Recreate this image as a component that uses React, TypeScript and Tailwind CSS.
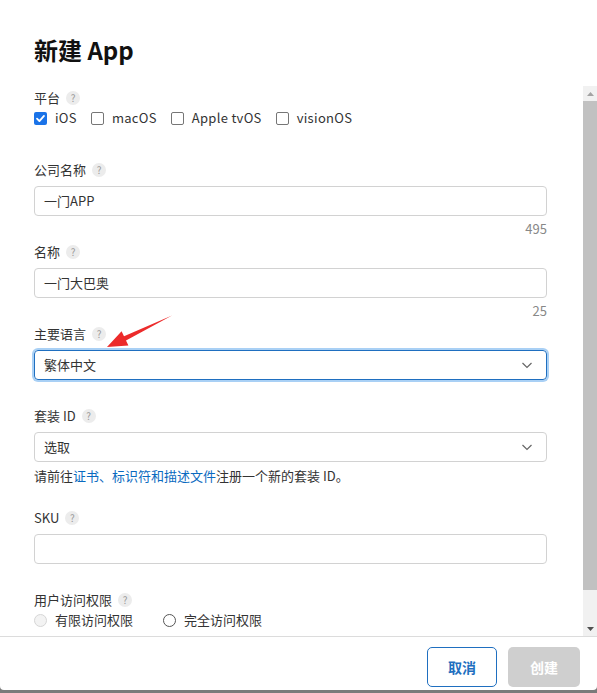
import React from "react";

const font = { fontFamily: '"Microsoft YaHei", "Noto Sans CJK SC", "Liberation Sans", sans-serif' };

function Q() {
  return (
    <span className="ml-[6px] inline-flex h-[14px] w-[14px] items-center justify-center rounded-full bg-[#ececec] text-[10px] leading-none text-[#9a9a9a]">
      ?
    </span>
  );
}

function Label({ children }: { children: React.ReactNode }) {
  return (
    <div className="flex h-[18px] items-center text-[13px] leading-[18px] text-[#333]">
      <span>{children}</span>
      <Q />
    </div>
  );
}

function Check({ checked, label }: { checked?: boolean; label: string }) {
  return (
    <div className="flex items-center">
      {checked ? (
        <span className="flex h-[13px] w-[13px] items-center justify-center rounded-[2px] bg-[#1a73e8]">
          <svg width="11" height="11" viewBox="0 0 12 12">
            <path d="M2.2 6.2 L4.8 8.8 L9.8 3.2" fill="none" stroke="white" strokeWidth="2" strokeLinecap="round" strokeLinejoin="round" />
          </svg>
        </span>
      ) : (
        <span className="h-[13px] w-[13px] rounded-[2px] border border-[#767676] bg-white" />
      )}
      <span className="ml-[8px] text-[13px] tracking-[0.3px] text-[#333]">{label}</span>
    </div>
  );
}

function Chevron() {
  return (
    <svg width="14" height="14" viewBox="0 0 14 14">
      <path d="M2.5 5 L7 9.5 L11.5 5" fill="none" stroke="#666" strokeWidth="1.2" />
    </svg>
  );
}

export default function App() {
  return (
    <div className="min-h-[693px] w-[597px] bg-[#7a7a7a]" style={font}>
      <div className="relative flex h-[690px] w-[597px] flex-col overflow-hidden rounded-b-[4px] bg-white">
        {/* Title */}
        <div className="h-[86px] pl-[34px] pt-[34px]">
          <h1 className="text-[24px] font-bold leading-[32px] text-[#111]">新建 App</h1>
        </div>

        {/* Scroll area */}
        <div className="flex h-[551px] border-b border-[#dcdcdc]">
          <div className="flex-1 overflow-hidden pl-[34px] pr-[36px] pt-[3px]">
            <Label>平台</Label>
            <div className="mt-[2px] flex h-[18px] items-center gap-[14px]">
              <Check checked label="iOS" />
              <Check label="macOS" />
              <Check label="Apple tvOS" />
              <Check label="visionOS" />
            </div>

            <div className="mt-[34px]">
              <Label>公司名称</Label>
            </div>
            <div className="mt-[7px] flex h-[30px] items-center rounded-[4px] border border-[#d2d2d2] px-[9px] text-[13px] text-[#333]">
              一门APP
            </div>
            <div className="mt-[4px] h-[18px] text-right text-[13px] leading-[18px] text-[#888]">495</div>

            <div className="mt-[5px]">
              <Label>名称</Label>
            </div>
            <div className="mt-[7px] flex h-[30px] items-center rounded-[4px] border border-[#d2d2d2] px-[9px] text-[13px] text-[#333]">
              一门大巴奥
            </div>
            <div className="mt-[4px] h-[18px] text-right text-[13px] leading-[18px] text-[#888]">25</div>

            <div className="mt-[5px]">
              <Label>主要语言</Label>
            </div>
            <div className="mt-[7px] flex h-[30px] items-center justify-between rounded-[4px] border border-[#1f6fc0] px-[9px] text-[13px] text-[#333] shadow-[0_0_0_2px_#a9d0f5]">
              <span>繁体中文</span>
              <span className="mr-[3px]"><Chevron /></span>
            </div>

            <div className="mt-[27px]">
              <Label>套装 ID</Label>
            </div>
            <div className="mt-[7px] flex h-[30px] items-center justify-between rounded-[4px] border border-[#d2d2d2] px-[9px] text-[13px] text-[#333]">
              <span>选取</span>
              <span className="mr-[3px]"><Chevron /></span>
            </div>
            <div className="mt-[5px] h-[18px] text-[13px] leading-[18px] text-[#333]">
              请前往<span className="text-[#0a6ac0]">证书、标识符和描述文件</span>注册一个新的套装 ID。
            </div>

            <div className="mt-[24px]">
              <Label>SKU</Label>
            </div>
            <div className="mt-[7px] h-[30px] rounded-[4px] border border-[#d2d2d2]" />

            <div className="mt-[27px]">
              <Label>用户访问权限</Label>
            </div>
            <div className="mt-[2px] flex h-[18px] items-center text-[13px] text-[#333]">
              <span className="h-[13px] w-[13px] rounded-full border border-[#d6d6d6] bg-[#f3f3f3]" />
              <span className="ml-[8px]">有限访问权限</span>
              <span className="ml-[30px] h-[13px] w-[13px] rounded-full border border-[#555] bg-white" />
              <span className="ml-[8px]">完全访问权限</span>
            </div>
          </div>

          {/* Fake scrollbar */}
          <div className="flex w-[14px] flex-col bg-[#f1f1f1]">
            <div className="flex h-[15px] items-center justify-center">
              <svg width="7" height="4" viewBox="0 0 7 4"><path d="M0 4 L3.5 0 L7 4 Z" fill="#a3a3a3" /></svg>
            </div>
            <div className="h-[489px] bg-[#c1c1c1]" />
            <div className="flex flex-1 items-end justify-center pb-[5px]">
              <svg width="7" height="4" viewBox="0 0 7 4"><path d="M0 0 L7 0 L3.5 4 Z" fill="#505050" /></svg>
            </div>
          </div>
        </div>

        {/* Footer */}
        <div className="flex flex-1 items-start justify-end gap-[11px] pr-[17px] pt-[10px]">
          <button className="h-[40px] w-[70px] rounded-[5px] border border-[#1f6fc0] bg-white text-[14px] font-bold text-[#1f6fc0]">
            取消
          </button>
          <button className="h-[40px] w-[72px] rounded-[5px] bg-[#cfcfcf] text-[14px] font-bold text-white">
            创建
          </button>
        </div>

        {/* Red annotation arrow */}
        <svg className="pointer-events-none absolute left-0 top-0" width="597" height="693">
          <path d="M107 347 L121.6 331.2 L124 336.2 L172 315.5 L126 340.6 L128.4 345.6 Z" fill="#ec2b2b" />
        </svg>
      </div>
    </div>
  );
}
